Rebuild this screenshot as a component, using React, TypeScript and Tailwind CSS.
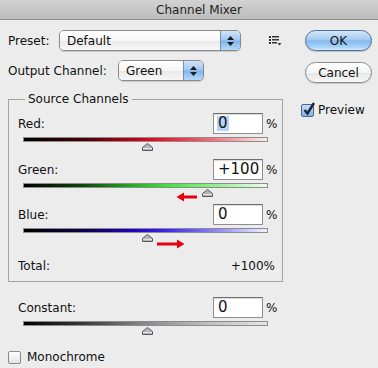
import React from "react";

const font = "font-['DejaVu_Sans',sans-serif]";

function Thumb({ left }: { left: string }) {
  return (
    <div className={`h-[8px] ${left}`}>
      <svg width="11" height="8" viewBox="0 0 11 8">
        <path
          d="M5.5 0.5 L10.5 4.5 L10.5 7.5 L0.5 7.5 L0.5 4.5 Z"
          fill="#b4b6ba"
          stroke="#55585c"
          strokeWidth="1"
        />
        <line x1="1" y1="5.5" x2="10" y2="5.5" stroke="#e6e6e6" />
      </svg>
    </div>
  );
}

function Field({
  value,
  selected,
}: {
  value: string;
  selected?: boolean;
}) {
  return (
    <div className="flex items-center">
      <div className="flex h-[21px] w-[50px] items-center border border-[#8f8f8f] border-t-[#6f6f6f] bg-white pl-[3px] text-[15px] leading-none shadow-[inset_0_1px_1px_rgba(0,0,0,0.15)]">
        <span className={selected ? "bg-[#b3d3f7] px-[1px]" : "px-[1px]"}>
          {value}
        </span>
      </div>
      <span className="ml-[3px] text-[12px]">%</span>
    </div>
  );
}

function Popup({ label, width }: { label: string; width: string }) {
  return (
    <div
      className={`flex h-[21px] ${width} overflow-hidden rounded-[5px] border border-[#8a8a8a] shadow-[0_1px_1px_rgba(0,0,0,0.15)]`}
    >
      <div className="flex flex-1 items-center bg-[linear-gradient(to_bottom,#ffffff_0%,#f6f6f6_50%,#e9e9e9_51%,#f7f7f7_100%)] pl-[7px] text-[12px]">
        {label}
      </div>
      <div className="flex w-[20px] flex-col items-center justify-center gap-[2px] border-l border-[#7a8ea8] bg-[linear-gradient(to_bottom,#cfe3f8_0%,#9fc8f1_48%,#7fb4ec_52%,#b4d9f9_100%)]">
        <svg width="7" height="4" viewBox="0 0 7 4">
          <path d="M3.5 0 L7 4 L0 4 Z" fill="#1c1c1c" />
        </svg>
        <svg width="7" height="4" viewBox="0 0 7 4">
          <path d="M0 0 L7 0 L3.5 4 Z" fill="#1c1c1c" />
        </svg>
      </div>
    </div>
  );
}

function Channel({
  label,
  value,
  selected,
  bar,
  thumb,
  top,
}: {
  label: string;
  value: string;
  selected?: boolean;
  bar: string;
  thumb: string;
  top: string;
}) {
  return (
    <div className={top}>
      <div className="flex h-[21px] items-center">
        <span className="w-[204px] pl-[9px] text-[12px]">{label}</span>
        <Field value={value} selected={selected} />
      </div>
      <div
        className={`ml-[14px] mt-[3px] h-[5px] w-[245px] border border-[#8c8c8c] ${bar}`}
      />
      <div className="mt-[1px]">
        <Thumb left={thumb} />
      </div>
    </div>
  );
}

export default function App() {
  return (
    <div
      className={`relative h-[368px] w-[378px] overflow-hidden bg-[#ececec] text-[#111] ${font}`}
    >
      {/* title bar */}
      <div className="flex h-[20px] items-center justify-center border-b border-[#8e8e8e] bg-[linear-gradient(to_bottom,#d2d2d2,#bdbdbd)] pl-[20px] text-[12px] text-[#1e1e1e]">
        Channel Mixer
      </div>

      <div className="flex pl-[8px] pt-[10px]">
        {/* left column */}
        <div className="w-[284px]">
          <div className="flex h-[21px] items-center">
            <span className="w-[51px] text-[12px]">Preset:</span>
            <Popup label="Default" width="w-[182px]" />
            <svg
              className="ml-[28px]"
              width="13"
              height="10"
              viewBox="0 0 13 10"
            >
              <rect x="0" y="0" width="2" height="2" fill="#333" />
              <rect x="3" y="0" width="7" height="1.5" fill="#333" />
              <rect x="0" y="3" width="2" height="2" fill="#333" />
              <rect x="3" y="3" width="7" height="1.5" fill="#333" />
              <rect x="0" y="6" width="2" height="2" fill="#333" />
              <rect x="3" y="6" width="5" height="1.5" fill="#333" />
              <path d="M8.5 7 L12.5 7 L10.5 9.5 Z" fill="#333" />
            </svg>
          </div>

          <div className="mt-[9px] flex h-[21px] items-center">
            <span className="w-[110px] text-[12px]">Output Channel:</span>
            <Popup label="Green" width="w-[86px]" />
          </div>

          <fieldset className="mt-[11px] w-[275px] border border-[#a2a2a2] pb-[8px]">
            <legend className="ml-[16px] px-[3px] text-[12px] leading-[14px]">
              Source Channels
            </legend>
            <Channel
              top="mt-[7px]"
              label="Red:"
              value="0"
              selected
              thumb="ml-[133px]"
              bar="bg-[linear-gradient(to_right,#000_0%,#4a0008_25%,#c0001a_45%,#e8102a_55%,#f5606e_75%,#fdecee_100%)]"
            />
            <Channel
              top="mt-[8px]"
              label="Green:"
              value="+100"
              thumb="ml-[193px]"
              bar="bg-[linear-gradient(to_right,#000_0%,#0c4a0c_25%,#20b020_45%,#40e838_60%,#90f088_78%,#eefdee_100%)]"
            />
            <Channel
              top="mt-[7px]"
              label="Blue:"
              value="0"
              thumb="ml-[133px]"
              bar="bg-[linear-gradient(to_right,#000_0%,#0c0050_25%,#2000c8_45%,#3824f0_58%,#8c80f8_78%,#f0f0fe_100%)]"
            />
            <div className="mt-[16px] flex h-[15px] items-center justify-between pl-[9px] pr-[7px] text-[12px]">
              <span>Total:</span>
              <span>+100%</span>
            </div>
          </fieldset>

          <div className="mt-[15px] flex h-[21px] items-center">
            <span className="w-[205px] pl-[10px] text-[12px]">Constant:</span>
            <Field value="0" />
          </div>
          <div className="ml-[15px] mt-[3px] h-[5px] w-[245px] border border-[#8c8c8c] bg-[linear-gradient(to_right,#000_0%,#3a3a3a_25%,#8a8a8a_50%,#bdbdbd_75%,#e6e6e6_100%)]" />
          <div className="mt-[1px]">
            <Thumb left="ml-[134px]" />
          </div>

          <div className="mt-[13px] flex items-center">
            <div className="h-[13px] w-[13px] rounded-[2px] border border-[#8a8a8a] bg-[linear-gradient(to_bottom,#ffffff,#e4e4e4)]" />
            <span className="ml-[6px] text-[12px]">Monochrome</span>
          </div>
        </div>

        {/* right column */}
        <div className="ml-[9px] flex flex-col">
          <div className="ml-[4px] flex h-[21px] w-[67px] items-center justify-center rounded-full border border-[#4f6f9c] bg-[linear-gradient(to_bottom,#d3e6f9_0%,#a3cbf2_45%,#84b8ee_52%,#a9d3f8_85%,#d4ecfd_100%)] text-[12px] shadow-[0_1px_1px_rgba(0,0,0,0.2)]">
            OK
          </div>
          <div className="ml-[4px] mt-[11px] flex h-[21px] w-[67px] items-center justify-center rounded-full border border-[#8a8a8a] bg-[linear-gradient(to_bottom,#ffffff_0%,#f4f4f4_50%,#e6e6e6_52%,#f8f8f8_100%)] text-[12px] shadow-[0_1px_1px_rgba(0,0,0,0.15)]">
            Cancel
          </div>
          <div className="mt-[18px] flex items-center">
            <div className="relative h-[13px] w-[13px] rounded-[2px] border border-[#50688c] bg-[linear-gradient(to_bottom,#c8def6,#7fb0e8)]">
              <svg
                className="absolute -top-[3px] left-[1px]"
                width="13"
                height="14"
                viewBox="0 0 13 14"
              >
                <path
                  d="M1.5 8 L4.5 11.5 L11 1"
                  fill="none"
                  stroke="#17243a"
                  strokeWidth="2.4"
                />
              </svg>
            </div>
            <span className="ml-[4px] text-[12px]">Preview</span>
          </div>
        </div>
      </div>

      {/* red annotation arrows */}
      <svg
        className="absolute left-[176px] top-[192px]"
        width="22"
        height="10"
        viewBox="0 0 22 10"
      >
        <path d="M8 3.5 L21 3.5 L21 6.5 L8 6.5 Z" fill="#e4000e" />
        <path d="M0.5 5 L8 0.5 L8 9.5 Z" fill="#e4000e" />
      </svg>
      <svg
        className="absolute left-[156px] top-[239px]"
        width="29"
        height="10"
        viewBox="0 0 29 10"
      >
        <path d="M1 3.5 L21 3.5 L21 6.5 L1 6.5 Z" fill="#e4000e" />
        <path d="M28.5 5 L21 0.5 L21 9.5 Z" fill="#e4000e" />
      </svg>
    </div>
  );
}
